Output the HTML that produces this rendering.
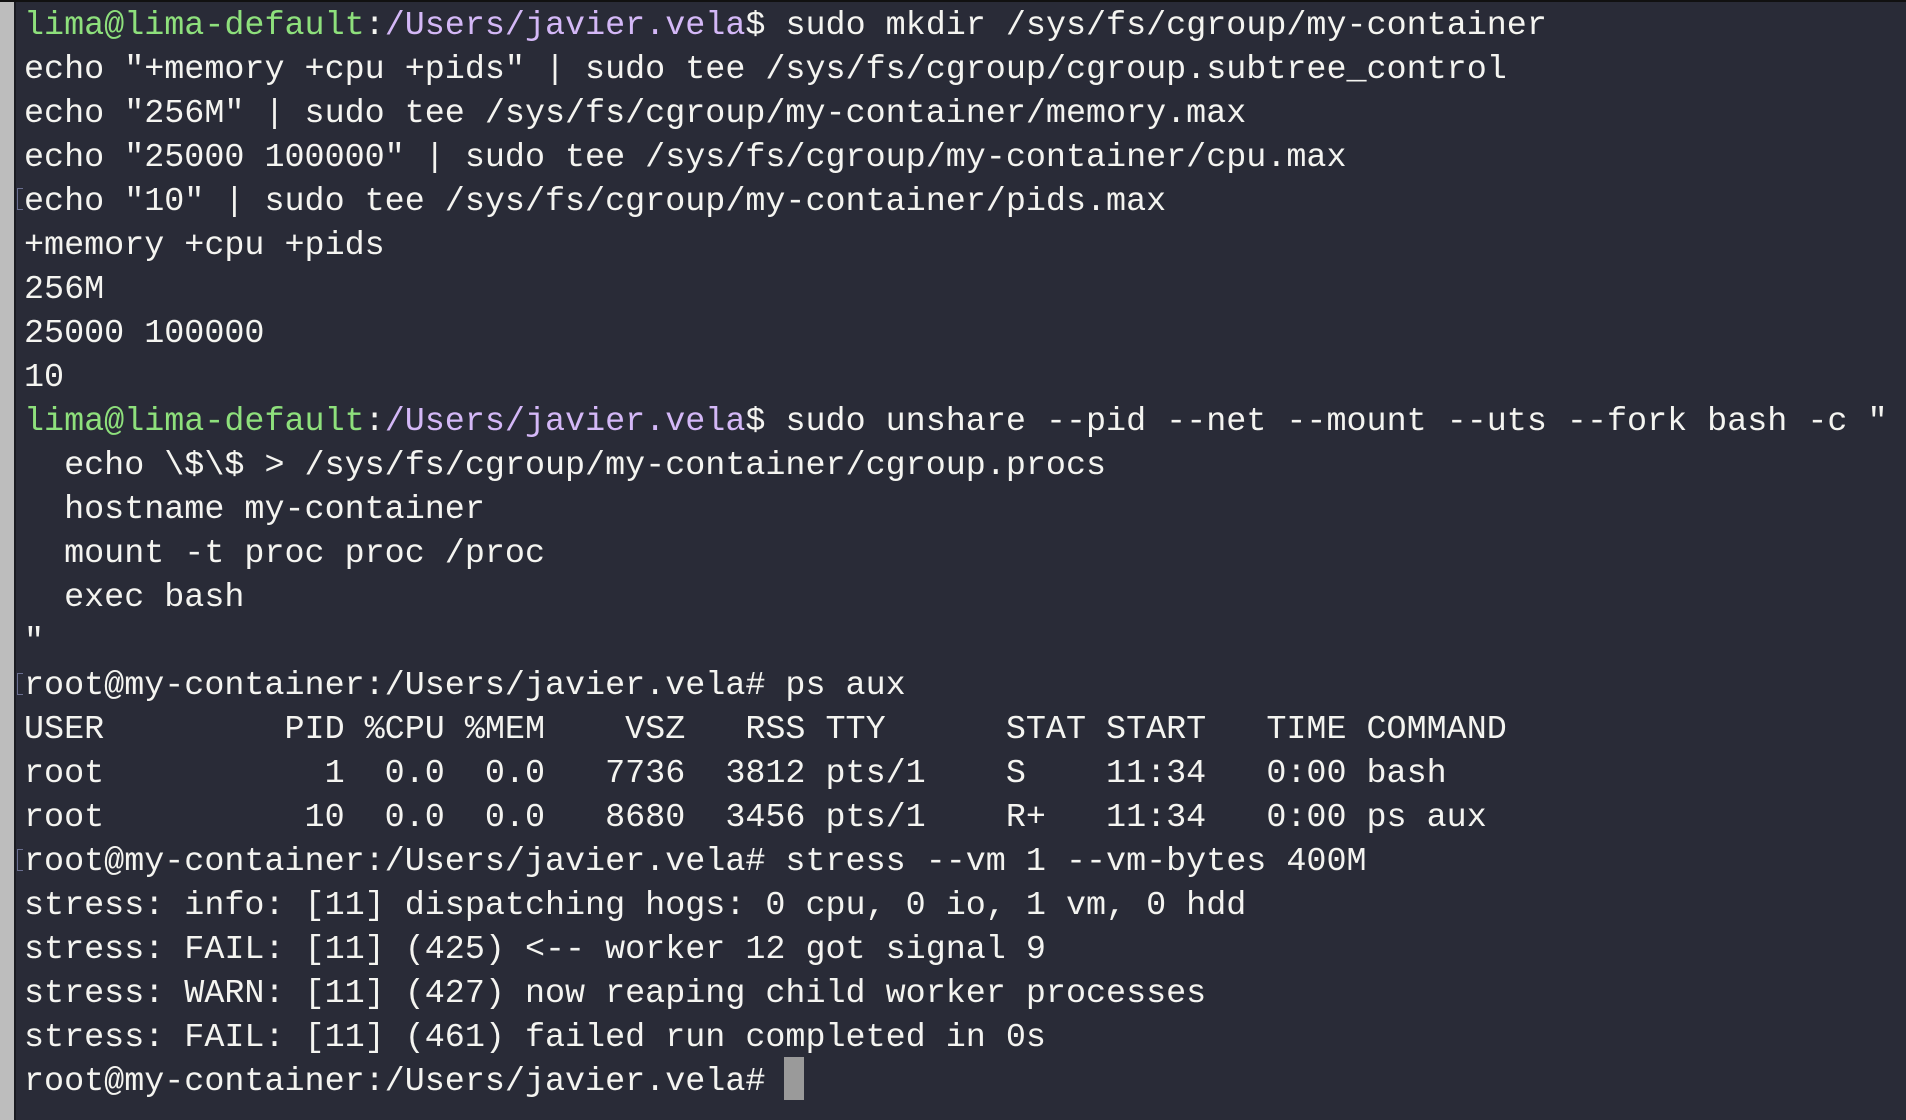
<!DOCTYPE html>
<html><head><meta charset="utf-8"><style>
html,body{margin:0;padding:0;width:1906px;height:1120px;overflow:hidden;background:#292b37;}
.left{position:absolute;left:0;top:0;width:14px;height:1120px;background:#bdbdbd;}
.lb{position:absolute;left:14px;top:0;width:2px;height:1120px;background:#1a1b22;}
.top{position:absolute;left:0;top:0;width:1906px;height:2px;background:#111;}
pre{position:absolute;left:24px;top:4px;margin:0;font-family:"Liberation Mono","DejaVu Sans Mono",monospace;font-size:33.4px;line-height:44px;color:#f4f4f0;white-space:pre;}
.g{color:#8ee07c}.p{color:#d4b8f7}
.cur{position:absolute;left:784px;top:1057px;width:20px;height:43px;background:#9a9a9a;}
.br{position:absolute;left:17px;width:5px;height:20px;border:1px solid #6a6f90;border-right:none;}
</style></head><body>
<div class="left"></div><div class="lb"></div><div class="top"></div>
<div class="br" style="top:188px"></div>
<div class="br" style="top:673px"></div>
<div class="br" style="top:849px"></div>
<pre><span class="g">lima@lima-default</span>:<span class="p">/Users/javier.vela</span>$ sudo mkdir /sys/fs/cgroup/my-container
echo "+memory +cpu +pids" | sudo tee /sys/fs/cgroup/cgroup.subtree_control
echo "256M" | sudo tee /sys/fs/cgroup/my-container/memory.max
echo "25000 100000" | sudo tee /sys/fs/cgroup/my-container/cpu.max
echo "10" | sudo tee /sys/fs/cgroup/my-container/pids.max
+memory +cpu +pids
256M
25000 100000
10
<span class="g">lima@lima-default</span>:<span class="p">/Users/javier.vela</span>$ sudo unshare --pid --net --mount --uts --fork bash -c "
  echo \$\$ > /sys/fs/cgroup/my-container/cgroup.procs
  hostname my-container
  mount -t proc proc /proc
  exec bash
"
root@my-container:/Users/javier.vela# ps aux
USER         PID %CPU %MEM    VSZ   RSS TTY      STAT START   TIME COMMAND
root           1  0.0  0.0   7736  3812 pts/1    S    11:34   0:00 bash
root          10  0.0  0.0   8680  3456 pts/1    R+   11:34   0:00 ps aux
root@my-container:/Users/javier.vela# stress --vm 1 --vm-bytes 400M
stress: info: [11] dispatching hogs: 0 cpu, 0 io, 1 vm, 0 hdd
stress: FAIL: [11] (425) &lt;-- worker 12 got signal 9
stress: WARN: [11] (427) now reaping child worker processes
stress: FAIL: [11] (461) failed run completed in 0s
root@my-container:/Users/javier.vela# </pre>
<div class="cur"></div>
</body></html>
